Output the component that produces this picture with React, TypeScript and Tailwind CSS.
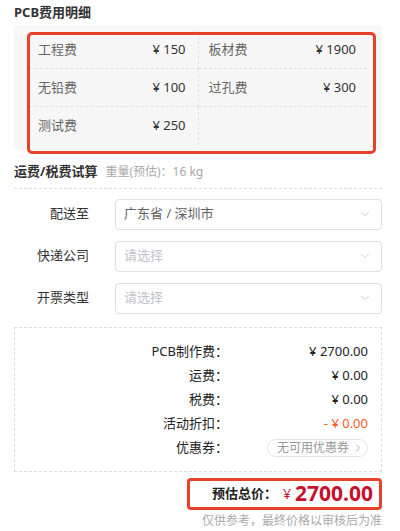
import { ChevronDown, ChevronRight } from "lucide-react";

const fees = [
  { left: ["工程费", "¥ 150"], right: ["板材费", "¥ 1900"] },
  { left: ["无铅费", "¥ 100"], right: ["过孔费", "¥ 300"] },
  { left: ["测试费", "¥ 250"], right: null },
];

const fields = [
  { label: "配送至", value: "广东省 / 深圳市", placeholder: false },
  { label: "快递公司", value: "请选择", placeholder: true },
  { label: "开票类型", value: "请选择", placeholder: true },
];

const summary = [
  { label: "PCB制作费：", value: "¥ 2700.00", tone: "text-[#222]" },
  { label: "运费：", value: "¥ 0.00", tone: "text-[#222]" },
  { label: "税费：", value: "¥ 0.00", tone: "text-[#222]" },
  { label: "活动折扣：", value: "- ¥ 0.00", tone: "text-[#ff5a1f]" },
];

export default function App() {
  return (
    <div className="w-[400px] min-h-[531px] bg-white pl-[14px] pr-[18px] pt-[3px] font-['Noto_Sans','Noto_Sans_CJK_SC',sans-serif] text-[13px]">
      <h2 className="h-[18px] text-[13px] font-bold leading-[18px] text-[#333]">PCB费用明细</h2>

      <div className="relative mt-[4px] rounded-[4px] bg-[#f7f7f7] pt-[6px] pb-[5px] pl-[16px] pr-[15px]">
        <div className="grid grid-cols-2">
          {fees.map((row, i) => {
            const last = i === fees.length - 1;
            return [
              <div
                key={`l${i}`}
                className={`flex h-[38px] items-center justify-between border-r border-dashed border-[#e0e0e0] pl-[8px] pr-[12px] ${last ? "" : "border-b"}`}
              >
                <span className="text-[#666]">{row.left[0]}</span>
                <span className="text-[#333]">{row.left[1]}</span>
              </div>,
              <div
                key={`r${i}`}
                className={`flex h-[38px] items-center justify-between border-dashed border-[#e0e0e0] pl-[10px] pr-[11px] ${last ? "" : "border-b"}`}
              >
                {row.right && (
                  <>
                    <span className="text-[#666]">{row.right[0]}</span>
                    <span className="text-[#333]">{row.right[1]}</span>
                  </>
                )}
              </div>,
            ];
          })}
        </div>
        <div className="pointer-events-none absolute left-[13px] top-[7px] h-[122px] w-[349px] rounded-[5px] border-[3px] border-[#e8412b]" />
      </div>

      <div className="mt-[12px] flex items-baseline gap-[8px] border-b border-dashed border-[#ddd] pb-[6px]">
        <span className="text-[13px] font-bold text-[#333]">运费/税费试算</span>
        <span className="text-[12px] text-[#aaa]">重量(预估)：16 kg</span>
      </div>

      <div className="mt-[10px] flex flex-col gap-[11px]">
        {fields.map((f) => (
          <div key={f.label} className="flex items-center">
            <span className="w-[75px] text-right text-[#333]">{f.label}</span>
            <div className="ml-[26px] flex h-[31px] flex-1 items-center justify-between rounded-[4px] border border-[#dcdfe6] pl-[8px] pr-[9px]">
              <span className={f.placeholder ? "text-[#c0c4cc]" : "text-[#606266]"}>{f.value}</span>
              <ChevronDown className="h-[14px] w-[14px] text-[#c0c4cc]" strokeWidth={1.5} />
            </div>
          </div>
        ))}
      </div>

      <div className="mt-[13px] border border-dashed border-[#ddd] pt-[12px] pb-[11px] pr-[13px]">
        {summary.map((s) => (
          <div key={s.label} className="flex h-[24px] items-center">
            <span className="w-[213px] text-right text-[#222]">{s.label}</span>
            <span className={`flex-1 text-right ${s.tone}`}>{s.value}</span>
          </div>
        ))}
        <div className="flex h-[24px] items-center">
          <span className="w-[213px] text-right text-[#222]">优惠券：</span>
          <span className="flex-1" />
          <span className="flex h-[18px] items-center gap-[3px] rounded-full border border-[#e2e4ea] pl-[9px] pr-[3px] text-[12px] text-[#999]">
            无可用优惠券
            <ChevronRight className="h-[12px] w-[12px]" strokeWidth={1.5} />
          </span>
        </div>
      </div>

      <div className="mt-[6px] flex justify-end">
        <div className="flex h-[32px] w-[195px] items-center justify-end rounded-[4px] border-[3px] border-[#e8412b] pr-[6px]">
          <span className="text-[13px] font-bold text-[#222]">预估总价：</span>
          <span className="ml-[6px] text-[14px] text-[#c8102e]">¥</span>
          <span className="ml-[4px] text-[21px] font-bold leading-none text-[#c8102e]">2700.00</span>
        </div>
      </div>

      <p className="mt-[2px] text-right text-[12px] text-[#aaa]">仅供参考，最终价格以审核后为准</p>
    </div>
  );
}
